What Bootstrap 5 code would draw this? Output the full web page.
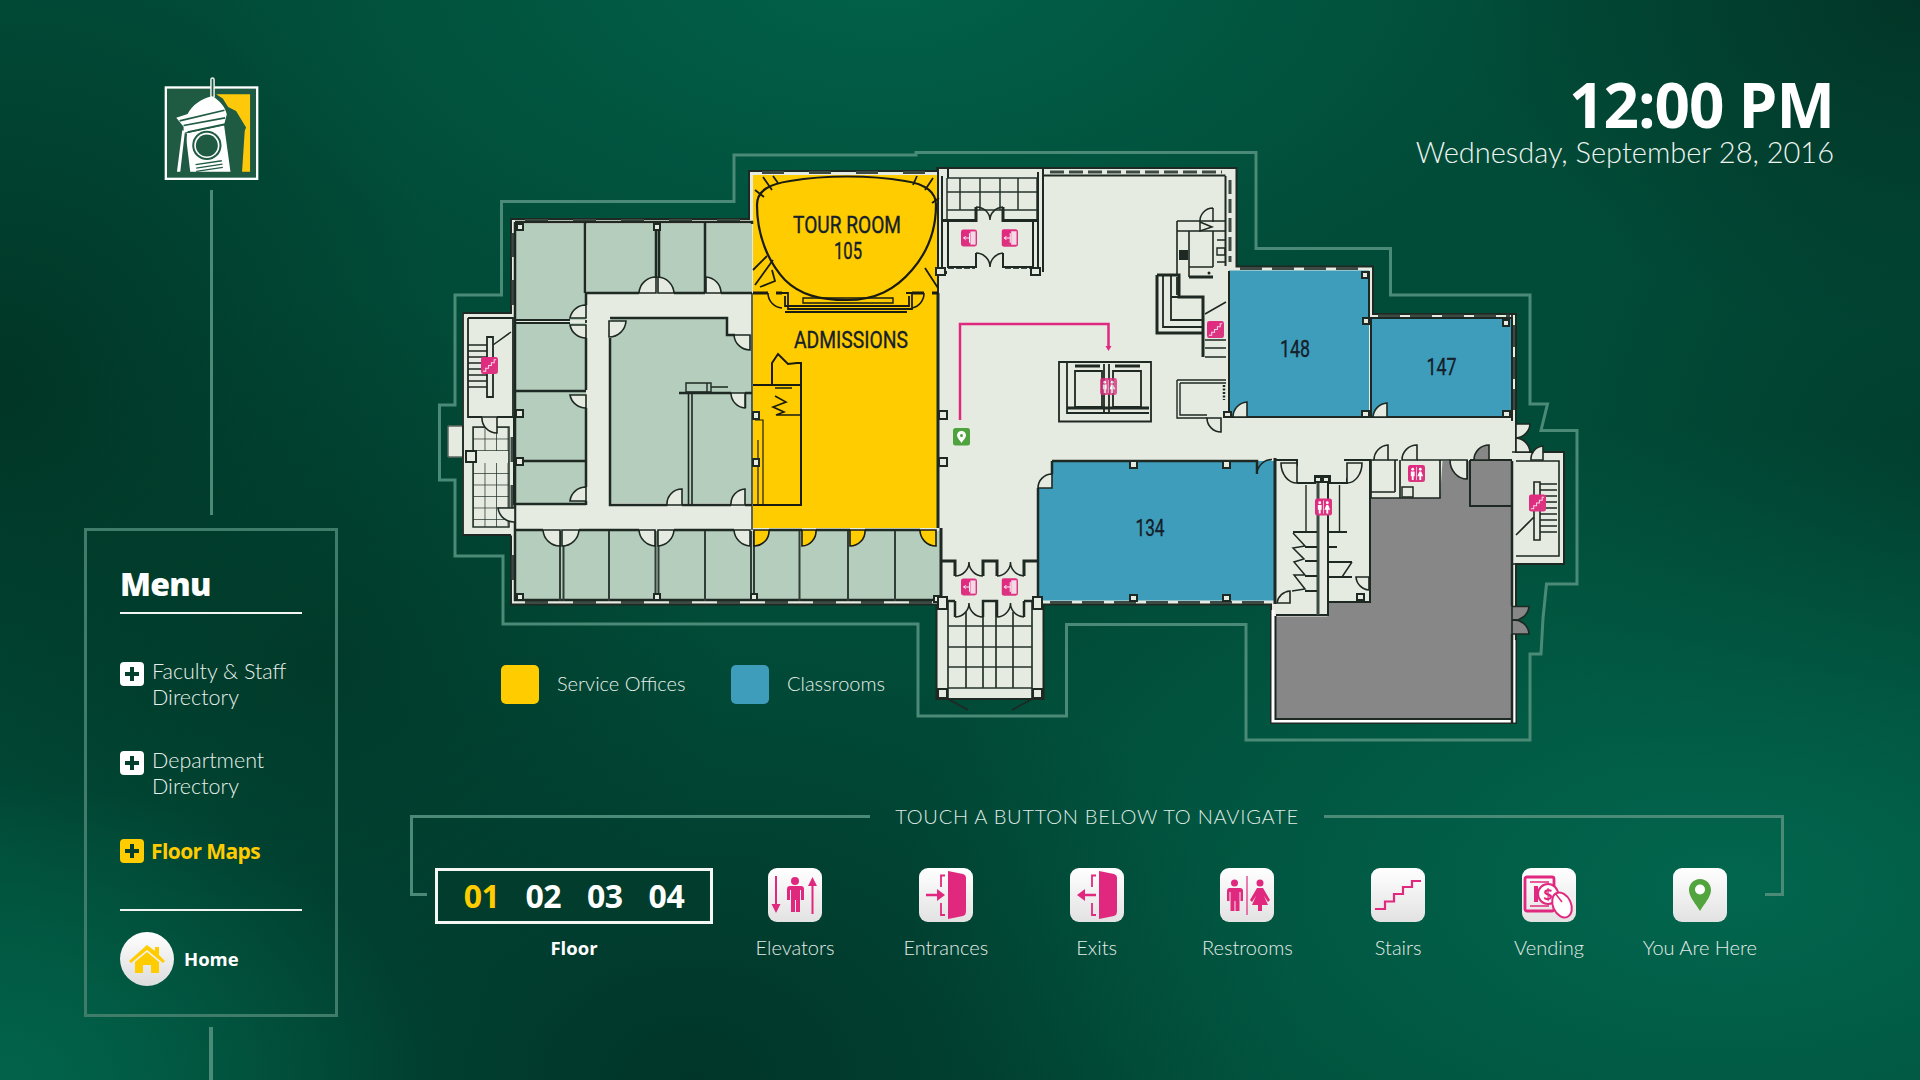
<!DOCTYPE html>
<html lang="en">
<head>
<meta charset="UTF-8" />
<title>Campus Floor Maps</title>
<link href="https://cdn.jsdelivr.net/npm/bootstrap@5.3.0/dist/css/bootstrap.min.css" rel="stylesheet" />
<style>
  body { margin: 0; background: #014a36; }
  .kiosk-screen {
    width: 1920px; height: 1080px; overflow: hidden; color: #fff;
    font-family: Lato, "Open Sans", sans-serif; font-weight: 300;
    background:
      radial-gradient(ellipse 680px 380px at 46% -4%, #02624a 0%, #02624a66 60%, #02624a00 100%),
      radial-gradient(ellipse 820px 460px at 90% 82%, #02664e 0%, #02664e66 60%, #02664e00 100%),
      radial-gradient(ellipse 420px 300px at 0% 100%, #02644b 0%, #02644b66 60%, #02644b00 100%),
      radial-gradient(ellipse 620px 460px at 36% 100%, #01352a 0%, #01352a66 60%, #01352a00 100%),
      radial-gradient(ellipse 460px 460px at 0% 36%, #013526 0%, #01352666 60%, #01352600 100%),
      radial-gradient(ellipse 460px 340px at 100% 0%, #023527 0%, #02352766 60%, #02352700 100%),
      radial-gradient(ellipse 380px 460px at 100% 45%, #013e2d 0%, #013e2d66 60%, #013e2d00 100%),
      radial-gradient(ellipse 400px 380px at 17% 62%, #013a2a 0%, #013a2a66 60%, #013a2a00 100%),
      #014c38;
  }
  .side-col { width: 254px; margin-left: 84px; flex: none; }
  .side-col > * { flex: none; }
  .kiosk-logo { display: block; width: 103px; height: 107px; margin: 75px auto 0 auto; position: relative; left: 3px; }
  .stem-line { width: 3px; background: #4b8a77; margin: 0 auto; }
  .stem-top { height: 325px; margin-top: 8px; }
  .stem-bottom { width: 4px; height: 60px; margin-top: 10px; }
  .menu-panel { height: 489px; margin-top: 13px; border: 3px solid #3f7c6a; padding: 0 33px; }
  .menu-title { font-family: "Open Sans", sans-serif; font-weight: 800; font-size: 32px; line-height: 41px; letter-spacing: -.7px; padding: 32px 0 8px; border-bottom: 2px solid #f2f5f2; }
  .menu-entry { font-size: 21.5px; line-height: 26px; color: #e9f1ec; gap: 8px; }
  .menu-entry svg { flex: none; margin-top: 4px; width: 24px; height: 24px; }
  .entry-one { margin-top: 44px; }
  .entry-two { margin-top: 37px; }
  .entry-three { margin-top: 39px; color: #ffcc00; font-weight: 700; font-size: 21px; gap: 7px; font-family: "Open Sans", sans-serif; letter-spacing: -.6px; }
  .entry-three svg { margin-top: 1px; }
  .home-row { margin-top: 45px; padding-top: 21px; border-top: 2px solid #f2f5f2; gap: 10px; font-family: "Open Sans", sans-serif; font-weight: 700; font-size: 18.5px; }
  .home-disc { width: 54px; height: 54px; border-radius: 50%; background: linear-gradient(#ffffff, #dcdcdc); }
  .main-col { margin-left: 72px; width: 1374px; flex: none; }
  .clock-block { height: 140px; padding-top: 74px; margin-right: -50px; }
  .clock-time { font-family: "Open Sans", sans-serif; font-weight: 700; font-size: 62px; line-height: 60px; letter-spacing: -1px; }
  .clock-date { font-size: 29px; line-height: 36px; color: #eef4f0; }
  .floor-map { display: block; width: 1374px; height: 640px; }
  .nav-head { height: 30px; margin-top: 21px; font-size: 20.1px; letter-spacing: .7px; color: #dfeae4; gap: 25px; }
  .nav-rule { flex: 1; height: 3px; background: #4b8a77; }
  .nav-body { height: 120px; }
  .frame-left, .frame-right { width: 17px; height: 80px; margin-top: -15px; border-bottom: 3px solid #4b8a77; flex: none; }
  .frame-left { border-left: 3px solid #4b8a77; }
  .frame-right { width: 19px; border-right: 3px solid #4b8a77; }
  .floor-col { width: 278px; margin: 37px 17px 0 8px; flex: none; }
  .floor-box { height: 56px; border: 3px solid #f4f7f4; background: #013c2c; gap: 26px; font-family: "Open Sans", sans-serif; font-weight: 700; font-size: 32px; letter-spacing: -.5px; }
  .floor-current { color: #ffcc00; }
  .floor-label { margin-top: 11px; line-height: 26px; font-family: "Open Sans", sans-serif; font-weight: 700; font-size: 18.5px; }
  .nav-items { gap: 20.8px; margin-top: 37px; }
  .nav-entry { width: 130px; }
  .nav-tile { display: block; width: 54px; height: 54px; margin: 0 auto; }
  .nav-name { margin-top: 12px; line-height: 26px; font-size: 20px; color: #e2ece7; white-space: nowrap; }
  .map-label { font-family: Roboto, "Liberation Sans", sans-serif; font-weight: 400; font-size: 23px; fill: #14202a; stroke: #14202a; stroke-width: .35px; }
  .map-legend { font-family: Lato, sans-serif; font-weight: 300; font-size: 20px; fill: #e6efea; }
</style>
</head>
<body>
<div class="kiosk-screen d-flex">
  <aside class="side-col d-flex flex-column">
    <svg class="kiosk-logo" viewBox="310 75 310 320" role="img" aria-label="Clock tower logo">
      <rect x="318.500" y="111.500" width="275" height="275" fill="#1f5b43" stroke="#fff" stroke-width="7" />
      <path d="M470,132H572V365H548L556,242 560,232 530,182 506,170 490,145Z" fill="#ffc90b" />
      <path d="M459,138V88" stroke="#e9f1ec" stroke-width="14" stroke-linecap="round" fill="none" />
      <path d="M459,138V88" stroke="#1f5b43" stroke-width="5" stroke-linecap="round" fill="none" />
      <path d="M350,203 384,191C398,165 425,145 458,138 480,150 497,170 502,192L494,224 372,248 372,230Z" fill="#fff" />
      <path d="M378,250 494,226 513,365H392Z M368,240 376,243 362,365H352Z" fill="#fff" />
      <path d="M360,212 495,180M372,226 497,203M384,246 497,222M380,250 370,365" stroke="#1f5b43" stroke-width="5" fill="none" />
      <circle cx="442" cy="286" r="44" fill="#1f5b43" />
      <circle cx="442" cy="286" r="38" fill="#fff" />
      <circle cx="442" cy="286" r="33" fill="#1f5b43" />
      <path d="M408,344 487,332M410,354 489,342M410,364 490,352" stroke="#1f5b43" stroke-width="4" fill="none" />
    </svg>
    <div class="stem-line stem-top"></div>
    <nav class="menu-panel">
      <div class="menu-title">Menu</div>
      <div class="menu-entry entry-one d-flex">
        <svg viewBox="0 0 24 24"><rect width="24" height="24" rx="4" fill="#fff" /><path d="M10 5h4v5h5v4h-5v5h-4v-5H5v-4h5z" fill="#05402e" /></svg>
        <span>Faculty &amp; Staff<br />Directory</span>
      </div>
      <div class="menu-entry entry-two d-flex">
        <svg viewBox="0 0 24 24"><rect width="24" height="24" rx="4" fill="#fff" /><path d="M10 5h4v5h5v4h-5v5h-4v-5H5v-4h5z" fill="#05402e" /></svg>
        <span>Department<br />Directory</span>
      </div>
      <div class="menu-entry entry-three d-flex">
        <svg viewBox="0 0 24 24"><rect width="24" height="24" rx="4" fill="#ffcc00" /><path d="M10 5h4v5h5v4h-5v5h-4v-5H5v-4h5z" fill="#05402e" /></svg>
        <span>Floor Maps</span>
      </div>
      <div class="home-row d-flex align-items-center">
        <div class="home-disc d-flex align-items-center justify-content-center">
          <svg width="36" height="30" viewBox="0 0 36 30"><path d="M18 1 26 7V3h4v8l6 6-2 2L18 6 2 19l-2-2z" fill="#ffcc00" /><path d="M6 18 18 8l12 10v11h-8v-8h-8v8H6z" fill="#ffcc00" /></svg>
        </div>
        <span>Home</span>
      </div>
    </nav>
    <div class="stem-line stem-bottom"></div>
  </aside>

  <main class="main-col">
    <div class="clock-block text-end">
      <div class="clock-time">12:00 PM</div>
      <div class="clock-date">Wednesday, September 28, 2016</div>
    </div>

    <svg class="floor-map" viewBox="410 140 1374 640" role="img" aria-label="Floor 1 map">
      <defs>
        <pattern id="tileSmall" x="473" y="427" width="11.500" height="11.500" patternUnits="userSpaceOnUse"><path d="M0 0H11.500M0 0V11.500" stroke="#26332c" stroke-width="1.500" fill="none" /></pattern>
        <linearGradient id="chipPink" x1="0" y1="0" x2="1" y2="1"><stop offset="0" stop-color="#e2267f" /><stop offset="1" stop-color="#d93a82" /></linearGradient>
        <symbol id="chipExit" viewBox="0 0 17 18"><rect width="17" height="18" rx="2.500" fill="url(#chipPink)" /><path d="M10 2h5.500v14H10z" fill="#f3d9e6" /><path d="M2.500 9H9M5 7 3 9l2 2M9 4v10" stroke="#fff" stroke-width="1" fill="none" /></symbol>
        <symbol id="chipStair" viewBox="0 0 18 18"><rect width="18" height="18" rx="2.500" fill="url(#chipPink)" /><path d="M2 15h3v-3h3V9h3V6h3V3h2" stroke="#f6d6e5" stroke-width="1.100" fill="none" /></symbol>
        <symbol id="chipRest" viewBox="0 0 18 18"><rect width="18" height="18" rx="2.500" fill="url(#chipPink)" /><circle cx="5" cy="4.500" r="1.500" fill="#fff" /><path d="M3 7h4v5H6v4H4v-4H3z" fill="#fff" /><circle cx="13" cy="4.500" r="1.500" fill="#fff" /><path d="M12 7h2l2 5h-2v4h-2v-4h-2z" fill="#fff" /><path d="M9 2v14" stroke="#fff" stroke-width=".7" /></symbol>
      </defs>

      <!-- site boundary -->
      <path d="M503,556V624H918V716H1066.500V624.500H1246V740H1530V654H1541L1543,618 1546.500,584H1577V430.500H1541L1547.500,404H1530V295H1390.500V248.500H1256V152.500H916V155H734V201.500H501.500V295H455V405H439.500V480H455V556Z" fill="none" stroke="#4b8a77" stroke-width="3" />

      <!-- floor base -->
      <path d="M511,219H749V171H937V168H1236.500V266.500H1373V314H1516V452H1564V564H1516V723H1271V604.500H1043.500V699H936.500V604.500H511Z" fill="#e6ebe1" stroke="#1d2922" stroke-width="2" />
      <path d="M463,313H512V535H463Z M448,426H463V457H448Z" fill="#e6ebe1" stroke="#e6ebe1" />
      <path d="M448,426H463V457H448Z" fill="#e6ebe1" stroke="#1d2922" stroke-width="1" />

      <!-- rooms -->
      <g fill="#b5cdbd">
        <rect x="516" y="224" width="70" height="96" />
        <rect x="587" y="224" width="69" height="68" />
        <rect x="657.500" y="224" width="47" height="68" />
        <rect x="706" y="224" width="46" height="68" />
        <rect x="516" y="323" width="70" height="67" />
        <rect x="516" y="392" width="70" height="68" />
        <rect x="516" y="462" width="70" height="42" />
        <path d="M611,319H727V335H752V503H611Z" />
        <rect x="516" y="531" width="425" height="70" />
      </g>
      <path d="M753,175H938V528H753Z" fill="#ffcc00" />
      <g fill="#3f9dbc">
        <rect x="1229" y="270.500" width="140" height="146.500" />
        <rect x="1371" y="318" width="141" height="99" />
        <path d="M1052,461H1275V600.500H1038V488L1052,474Z" />
      </g>
      <path d="M1442.500,461H1512V719H1275.500V616.500H1327.500V602H1371V498H1440Z" fill="#878787" />
      <path d="M1273,610V721H1514V640" fill="none" stroke="#fff" stroke-width="3" />
      <path d="M1275.500,616V719H1512" fill="none" stroke="#1d2922" stroke-width="2" />

      <!-- tile grids -->
      <rect x="473" y="427" width="36" height="100" fill="url(#tileSmall)" stroke="#26332c" stroke-width="1.500" />
      <rect x="466" y="451" width="42" height="12" fill="#e6ebe1" />
      <path d="M947,178H1037M947,192H1037M947,210H1037M947,178V220M960,178V210M980,178V210M1000,178V210M1018,178V210M1037,178V220" fill="none" stroke="#26332c" stroke-width="1.500" />
      <path d="M948,626H1032M948,647H1032M948,667H1032M948,688H1032M948,601V699M966,612V688M983,601V688M996,601V688M1013,612V688M1032,601V699" fill="none" stroke="#26332c" stroke-width="1.700" />

      <!-- windows -->
      <g fill="none" stroke="#3c4a43" stroke-width="3">
        <path d="M525,220.500H750" stroke-dasharray="23 25" />
        <path d="M525,602.500H940" stroke-dasharray="23 25" />
        <path d="M762,172.500H936" stroke-dasharray="22 25" />
        <path d="M513,233V257M513,280V305M512,437V462M512,485V510M513,555V580" />
        <path d="M1050,172H1222M1230,180V262" stroke-dasharray="14 5" />
        <path d="M1240,268.500H1366M1378,316H1510M1514,325V410" stroke-dasharray="22 10" />
        <path d="M1050,602.500H1270" stroke-dasharray="22 10" />
        <path d="M948,267.500H975M1005,267.500H1033" stroke-dasharray="6 2" />
      </g>

      <!-- walls -->
      <g fill="none" stroke="#1d2922" stroke-width="2.500">
        <path d="M515,222H752V224M515,222V600H940" />
        <path d="M585,223V293M656,223V278M659,223V278M705,223V293" />
        <path d="M585,293H639M674,293H705M721,293H752" />
        <path d="M586,293V305M586,338V390M586,408V487M586,501V505" />
        <path d="M516,320H570M516,323H570M586,320V323" stroke-width="1.800" />
        <path d="M516,391H586M516,461H585M516,504H586" />
        <path d="M610,318H727V335H735M610,338V505H667.500M682,505H731M745,505H752" />
        <path d="M688.500,393V505M692,393V505" stroke-width="1.600" />
        <path d="M679,393H731M745,393H752M745,408V393" />
        <path d="M686,383H711V392H686ZM707,383V392M711,387H728" stroke-width="1.400" />
        <path d="M516,530H543M579,530H639M674,530H734M769,530H802M816,530H850M865,530H920" />
        <path d="M560,531V601M563.500,531V601M609,531V601M655.500,531V601M658.500,531V601M705,531V601M751,531V601M754,531V601M799.500,531V601M848,531V601M895,531V601" stroke="#303e37" stroke-width="2" />
        <path d="M752,293V530" stroke-width="1.400" />
        <path d="M938,293V528M941,528V598" stroke-width="3" />
        <path d="M936,170H938V293" stroke-width="2" />
        <path d="M463,313H512M468,318H513V417H497M482,417H468V318M463,313V535H511" stroke-width="1.800" />
        <path d="M487,337H493V397H487Z" stroke-width="1.800" />
        <path d="M468,345H487M468,351H487M468,357H487M468,363H487M468,369H487M468,375H487M468,381H487M468,387H487M493,345 511,332" stroke-width="1.500" />
        <path d="M514,417V505" stroke-width="2" />
      </g>

      <!-- admissions and tour room -->
      <g fill="none" stroke="#1a1c12" stroke-width="2">
        <path d="M753,385H801V505H753M801,385V363H797L788,364 778,354 772,363V385" />
        <path d="M755,420H763V505M758,440V505" stroke-width="1.200" />
        <path d="M775,388H792M775,396 786,402 773,407 784,412 776,415H801" stroke-width="1.600" />
        <path d="M757,205C757,190 770,184 790,181 825,175 870,175 905,181 925,184 936,192 936,205 936,235 925,255 912,270 895,290 875,300 847,300 820,300 800,295 785,280 768,262 757,235 757,205Z" stroke-width="2.200" />
        <path d="M763,177 772,190M773,176 778,183M755,190 764,197M917,176 913,185M933,178 925,190M939,198 932,203M755,285 773,260M753,270 767,256M760,287 775,281 772,270M925,268 938,288" stroke-width="1.800" />
        <path d="M782,293H788V309H912V293H906M785,296V306H909V296M785,312H907" stroke-width="1.800" />
        <path d="M803,298H893V303H803Z" stroke-width="1.400" />
        <path d="M753,293H768M782,293H776M912,293H924M932,293H938" stroke-width="3" />
      </g>
      <path d="M768,293A15,15 0 0 0 782,308M924,293A15,15 0 0 1 912,308" fill="none" stroke="#1a1c12" stroke-width="1.600" />

      <!-- atrium, vestibules and porch -->
      <g fill="none" stroke="#1d2922" stroke-width="2">
        <path d="M1043,168V272M1038,172V268M1225.500,176V266M1043,175.500H1225.500" />
        <path d="M937,168H948V178M942,176V270M937,272H946V274" />
        <path d="M942,220.500H976V207M1003,207V220.500H1037" stroke-width="3" />
        <path d="M948,220V267H976V253M1003,253V267H1033V220" />
        <path d="M942,561H955V576M983,576V561H997V576M1024,576V561H1037" stroke-width="3" />
        <path d="M955,601V617M983,617V601H997V617M1024,617V601M942,601H955M1024,601H1037" stroke-width="2.500" />
        <path d="M955,576A14,14 0 0 0 969,562 14,14 0 0 0 983,576M997,576A14,14 0 0 0 1010.500,562 14,14 0 0 0 1024,576M955,617A14,14 0 0 0 969,603 14,14 0 0 0 983,617M997,617A14,14 0 0 0 1010.500,603 14,14 0 0 0 1024,617" stroke-width="1.500" />
        <path d="M976,207A14,13 0 0 1 990,220 14,13 0 0 1 1003,207M976,253A14,14 0 0 1 990,267 14,14 0 0 1 1003,253" stroke-width="1.500" />
        <path d="M948,699L968,710M1032,699 1012,710" stroke-width="1.800" />
      </g>

      <!-- east half walls -->
      <g fill="none" stroke="#1d2922" stroke-width="2">
        <path d="M1229,271V418M1369,271V318H1371V418M1229,417H1512M1371,318H1512V420" />
        <path d="M1052,461H1257V474M1052,461V474M1038,488V602" stroke-width="2.500" />
        <path d="M1059,362H1151V421.500H1059ZM1067,363V413H1149M1075,371H1102V407H1075ZM1113,371H1141V407H1113ZM1109,364V412M1104,364V412" stroke-width="1.800" />
        <path d="M1075,366H1100M1115,366H1140M1067,408H1149" stroke-width="3" />

        <path d="M1213,208A13,13 0 0 0 1200,222M1213,208V222M1200,222 1212,227 1200,231Z" stroke-width="1.500" />
        <path d="M1177,221H1225M1177,231H1225M1177,221V275M1189,231V277M1213,231V267M1189,267H1213" stroke-width="1.600" />
        <path d="M1189,277H1213" stroke-width="3" />
        <rect x="1180" y="251" width="7" height="8" fill="#1d2922" />
        <path d="M1217,240H1225M1217,248H1225V255H1217ZM1217,262H1225" stroke-width="1.400" />
        <circle cx="1209" cy="273" r="1.500" fill="#1d2922" stroke="none" />
        <path d="M1157,275H1179V297H1203V357M1157,275V333H1203" stroke-width="3" />
        <path d="M1163,275V327H1203M1171,275V320H1203M1177,277V295M1171,297H1179" stroke-width="1.800" />
        <path d="M1205,340H1226M1205,348H1226M1205,357H1226M1205,314 1226,302" stroke-width="1.500" />
        <path d="M1177,380H1226M1177,380V418H1207M1180,383H1226M1180,383V415H1207" stroke-width="1.400" />
        <path d="M1224,385V400" stroke-width="2.500" stroke-dasharray="2 1.500" />

        <path d="M1276,460H1297V466" stroke-width="2" />
        <path d="M1275,458V604" stroke-width="3" />
        <path d="M1297,483H1315V476H1330V483H1347V478M1344,460H1370V602H1328M1328,476V615H1276" />
        <path d="M1318,476V615" stroke="#3c4a43" stroke-width="3" />
        <path d="M1306,485V532M1339.500,485V532" stroke-width="1.400" />
        <path d="M1293,532H1317M1329,532H1347M1305,547H1317M1329,547H1337M1305,561H1317M1329,562H1352M1305,576H1317M1329,577H1352M1305,591H1317" />
        <path d="M1293,533 1305,546 1293,548 1304,559 1294,562 1305,575 1294,575 1305,589 1292,591M1352,562 1342,577" stroke-width="1.500" />

        <path d="M1371,460V498H1440V460H1450M1374,460H1371M1388,460H1398M1417,460H1440M1395,460V492M1400,460V498M1371,492H1395" stroke-width="1.700" />
        <path d="M1402,487H1413V497H1402Z" stroke-width="1.500" />
        <path d="M1470,460V506H1511M1467,460V479M1470,460H1512" stroke-width="2" />

        <path d="M1512,314V421M1516,314V424" stroke-width="1.800" />
        <path d="M1512,452H1564V564H1512M1516,461H1559V556H1516M1534,482H1540V540H1534ZM1540,484H1557M1540,490H1557M1540,496H1557M1540,502H1557M1540,508H1557M1540,514H1557M1540,520H1557M1540,526H1557M1540,532H1557M1516,535 1534,517" stroke-width="1.600" />
        <path d="M1512,461V606M1512,634V723" stroke-width="2.500" />
      </g>

      <!-- door swings -->
      <path d="M639,293A17,17 0 0 1 656,277V293ZM658,277A17,17 0 0 1 674,293H658ZM706,277A16,16 0 0 1 721,293H706ZM586,305A16,16 0 0 0 570,318H586ZM570,325A16,16 0 0 0 586,338V325ZM570,395A16,16 0 0 0 586,408V395ZM586,487A16,16 0 0 0 570,501H586ZM626,321A17,17 0 0 1 609,337V321ZM734,335A16,16 0 0 0 750,350V335ZM731,393A15,15 0 0 0 745,408V393ZM682,489A15,15 0 0 0 667,505H682ZM745,489A15,15 0 0 0 731,505H745ZM543,530A17,17 0 0 0 560,546V530ZM579,530A17,17 0 0 1 562,546V530ZM639,530A17,17 0 0 0 655,546V530ZM674,530A17,17 0 0 1 658,546V530ZM734,530A17,17 0 0 0 750,546V530ZM482,417A15,15 0 0 0 497,433V417ZM498,508A16,16 0 0 0 515,522V508Z" fill="#e6ebe1" stroke="#1d2922" stroke-width="1.600" />
      <path d="M769,530A15,15 0 0 1 754,546V530ZM816,530A15,15 0 0 1 802,546V530ZM865,530A15,15 0 0 1 850,546V530ZM920,530A16,16 0 0 0 936,546V530Z" fill="#ffcc00" stroke="#1a1c12" stroke-width="1.600" />
      <path d="M1233,417A15,15 0 0 1 1247,402V417ZM1373,417A15,15 0 0 1 1387,403V417ZM1207,418A14,14 0 0 0 1221,432V418ZM1374,460A15,15 0 0 1 1388,445V460ZM1402,460A15,15 0 0 1 1417,445V460ZM1531,460A13,13 0 0 1 1543,446V460ZM1516,424H1530A15,15 0 0 1 1516,438ZM1516,452H1530A15,15 0 0 0 1516,438ZM1281,463A16,20 0 0 0 1297,483V463ZM1362,463A15,20 0 0 1 1347,483V463ZM1277,603A14,14 0 0 1 1290,591V603ZM1356,577A14,14 0 0 0 1369,590V577ZM1038,488A14,14 0 0 1 1052,474V488ZM1450,460A17,19 0 0 0 1467,479V460Z" fill="#e6ebe1" stroke="#1d2922" stroke-width="1.600" />
      <path d="M1474,460A15,15 0 0 1 1489,445V460ZM1512,606.500H1529A15,15 0 0 1 1512,620ZM1512,634H1529A15,15 0 0 0 1512,620Z" fill="#878787" stroke="#1d2922" stroke-width="1.600" />
      <path d="M1257,474A15,15 0 0 1 1272,459.500" fill="#3f9dbc" stroke="#1d2922" stroke-width="1.600" />

      <!-- columns -->
      <g fill="#e6ebe1" stroke="#1d2922" stroke-width="2">
        <rect x="516" y="410" width="7" height="7" /><rect x="516" y="458" width="7" height="7" />
        <rect x="517" y="224" width="6" height="6" /><rect x="654" y="224" width="6" height="6" />
        <rect x="517" y="594" width="6" height="6" /><rect x="654" y="594" width="6" height="6" /><rect x="751" y="594" width="6" height="6" /><rect x="934" y="596" width="6" height="6" />
        <rect x="939" y="411" width="8" height="8" /><rect x="939" y="458" width="8" height="8" />
        <rect x="753" y="412" width="6" height="7" /><rect x="753" y="459" width="6" height="7" />
        <rect x="1130" y="461" width="7" height="7" /><rect x="1223" y="461" width="7" height="7" />
        <rect x="1130" y="595" width="7" height="6" /><rect x="1223" y="595" width="7" height="6" />
        <rect x="1362" y="411" width="7" height="6" /><rect x="1503" y="411" width="7" height="6" /><rect x="1363" y="318" width="6" height="6" /><rect x="1503" y="320" width="6" height="6" />
        <rect x="1362" y="272" width="6" height="6" /><rect x="1224" y="412" width="7" height="5" />
        <rect x="938" y="597" width="9" height="12" /><rect x="1033" y="597" width="9" height="12" />
        <rect x="938" y="689" width="9" height="9" /><rect x="1033" y="689" width="9" height="9" />
        <rect x="466" y="451" width="10" height="11" /><rect x="936" y="268" width="9" height="7" /><rect x="1031" y="268" width="9" height="7" />
        <rect x="1357" y="594" width="7" height="6" /><rect x="1315" y="477" width="6" height="5" /><rect x="1323" y="477" width="6" height="5" />
      </g>

      <!-- route -->
      <path d="M960,420V324H1108.500V347" fill="none" stroke="#e0287f" stroke-width="2.500" />
      <path d="M1105.500,346H1111.500L1108.500,351Z" fill="#e0287f" />

      <!-- map chips -->
      <use href="#chipStair" x="481" y="357" width="17" height="17" />
      <use href="#chipStair" x="1207" y="321" width="17" height="17" />
      <use href="#chipStair" x="1529" y="494" width="17" height="18" />
      <use href="#chipExit" x="961" y="229" width="16" height="18" />
      <use href="#chipExit" x="1001.500" y="229" width="16.500" height="18" />
      <use href="#chipExit" x="961" y="578" width="16" height="18" />
      <use href="#chipExit" x="1001.500" y="578" width="16.500" height="18" />
      <use href="#chipRest" x="1100" y="378" width="17" height="17" opacity=".8" />
      <use href="#chipRest" x="1315" y="498" width="17" height="18" />
      <use href="#chipRest" x="1408" y="465" width="17" height="17" />
      <rect x="953" y="428" width="17" height="17.500" rx="2.500" fill="#4ea33f" />
      <path d="M961.500,431C958.800,431 957,433 957,435.300 957,438 960,440.500 961.500,443 963,440.500 966,438 966,435.300 966,433 964.200,431 961.500,431Z" fill="#fff" />
      <circle cx="961.500" cy="435.500" r="1.500" fill="#4ea33f" />

      <!-- room labels -->
      <text class="map-label" x="793" y="233" textLength="108" lengthAdjust="spacingAndGlyphs">TOUR ROOM</text>
      <text class="map-label" x="834" y="259" textLength="28" lengthAdjust="spacingAndGlyphs">105</text>
      <text class="map-label" x="794" y="348" textLength="114" lengthAdjust="spacingAndGlyphs">ADMISSIONS</text>
      <text class="map-label" x="1280" y="357" textLength="30" lengthAdjust="spacingAndGlyphs">148</text>
      <text class="map-label" x="1426.500" y="375" textLength="30" lengthAdjust="spacingAndGlyphs">147</text>
      <text class="map-label" x="1135.500" y="536" textLength="29" lengthAdjust="spacingAndGlyphs">134</text>

      <!-- legend -->
      <rect x="501" y="665" width="38" height="39" rx="5" fill="#ffcc00" />
      <text class="map-legend" x="557" y="691">Service Offices</text>
      <rect x="731" y="665" width="38" height="39" rx="5" fill="#3f9dbc" />
      <text class="map-legend" x="787" y="691">Classrooms</text>
    </svg>

    <div class="nav-head d-flex align-items-center">
      <div class="nav-rule"></div>
      <span>TOUCH A BUTTON BELOW TO NAVIGATE</span>
      <div class="nav-rule"></div>
    </div>
    <div class="nav-body d-flex">
      <div class="frame-left"></div>
      <div class="floor-col text-center">
        <div class="floor-box d-flex align-items-center justify-content-center">
          <span class="floor-current">01</span><span>02</span><span>03</span><span>04</span>
        </div>
        <div class="floor-label">Floor</div>
      </div>
      <div class="nav-items d-flex">
        <div class="nav-entry text-center">
          <svg class="nav-tile" viewBox="0 0 54 54">
            <defs><linearGradient id="tileFace" x1="0" y1="0" x2="0" y2="1"><stop offset="0" stop-color="#fff" /><stop offset="1" stop-color="#e2e2e2" /></linearGradient></defs>
            <rect width="54" height="54" rx="9" fill="url(#tileFace)" />
            <circle cx="27" cy="13" r="4" fill="#e0287f" />
            <path d="M21 18h12a3 3 0 0 1 3 3v11h-3V22h-1v22h-4V32h-1v12h-4V22h-1v10h-3V21a3 3 0 0 1 3-3z" fill="#e0287f" />
            <path d="M8 8v30M44.500 46V16" stroke="#e0287f" stroke-width="2" fill="none" />
            <path d="M3.500 36h9L8 45zM40 18h9l-4.500-9z" fill="#e0287f" />
          </svg>
          <div class="nav-name">Elevators</div>
        </div>
        <div class="nav-entry text-center">
          <svg class="nav-tile" viewBox="0 0 54 54">
            <rect width="54" height="54" rx="9" fill="url(#tileFace)" />
            <path d="M29 3 44 6q3 1 3 4v33q0 4-3 5L29 51z" fill="#e0287f" />
            <path d="M26 7.500h-4V19M22 35v12h4" stroke="#e0287f" stroke-width="1.800" fill="none" />
            <path d="M7 27h13" stroke="#e0287f" stroke-width="2.500" />
            <path d="M18 21l8 6-8 6z" fill="#e0287f" />
          </svg>
          <div class="nav-name">Entrances</div>
        </div>
        <div class="nav-entry text-center">
          <svg class="nav-tile" viewBox="0 0 54 54">
            <rect width="54" height="54" rx="9" fill="url(#tileFace)" />
            <path d="M29 3 44 6q3 1 3 4v33q0 4-3 5L29 51z" fill="#e0287f" />
            <path d="M26 7.500h-4V19M22 35v12h4" stroke="#e0287f" stroke-width="1.800" fill="none" />
            <path d="M13 27h13" stroke="#e0287f" stroke-width="2.500" />
            <path d="M15 21l-8 6 8 6z" fill="#e0287f" />
          </svg>
          <div class="nav-name">Exits</div>
        </div>
        <div class="nav-entry text-center">
          <svg class="nav-tile" viewBox="0 0 54 54">
            <rect width="54" height="54" rx="9" fill="url(#tileFace)" />
            <circle cx="14.500" cy="15" r="3.500" fill="#e0287f" />
            <path d="M9 20h11a3 3 0 0 1 3 3v10h-2.500V24h-1v19h-4V33h-1v10h-4V24h-1v9H7V23a3 3 0 0 1 2-3z" fill="#e0287f" />
            <path d="M27 8v39" stroke="#e0287f" stroke-width="1.200" />
            <circle cx="40" cy="15" r="3.500" fill="#e0287f" />
            <path d="M37 20h6l7 12-2 2-4-6 4 9h-6v6h-4v-6h-6l4-9-4 6-2-2z" fill="#e0287f" />
          </svg>
          <div class="nav-name">Restrooms</div>
        </div>
        <div class="nav-entry text-center">
          <svg class="nav-tile" viewBox="0 0 54 54">
            <rect width="54" height="54" rx="9" fill="url(#tileFace)" />
            <path d="M4 41h10v-7.500h9V26h9v-7h9v-6h9" stroke="#e0287f" stroke-width="2.200" fill="none" />
          </svg>
          <div class="nav-name">Stairs</div>
        </div>
        <div class="nav-entry text-center">
          <svg class="nav-tile" viewBox="0 0 54 54">
            <rect width="54" height="54" rx="9" fill="url(#tileFace)" />
            <path d="M5 9h25a2 2 0 0 1 2 2v30a2 2 0 0 1-2 2H5a2 2 0 0 1-2-2V11a2 2 0 0 1 2-2z" fill="none" stroke="#e0287f" stroke-width="2.800" />
            <path d="M8 14h19M8 38h19" stroke="#e0287f" stroke-width="1.500" />
            <path d="M14 18v16" stroke="#e0287f" stroke-width="4" />
            <circle cx="26" cy="26" r="10" fill="#fff" stroke="#e0287f" stroke-width="2" />
            <text x="26" y="32" text-anchor="middle" font-family="Open Sans, sans-serif" font-weight="700" font-size="16" fill="#e0287f">$</text>
            <ellipse cx="40" cy="37" rx="9" ry="13" transform="rotate(-25 40 37)" fill="#fff" stroke="#e0287f" stroke-width="2" />
            <path d="M33 25l7 9" stroke="#e0287f" stroke-width="1.500" />
          </svg>
          <div class="nav-name">Vending</div>
        </div>
        <div class="nav-entry text-center">
          <svg class="nav-tile" viewBox="0 0 54 54">
            <rect width="54" height="54" rx="9" fill="url(#tileFace)" />
            <path d="M27 11c-6.500 0-11 5-11 11 0 7 7 14 11 21 4-7 11-14 11-21 0-6-4.500-11-11-11z" fill="#52a43f" />
            <circle cx="27" cy="21.500" r="5" fill="#fff" />
          </svg>
          <div class="nav-name">You Are Here</div>
        </div>
      </div>
      <div class="frame-right ms-auto"></div>
    </div>
  </main>
</div>
<script src="https://cdn.jsdelivr.net/npm/bootstrap@5.3.0/dist/js/bootstrap.bundle.min.js"></script>
</body>
</html>
